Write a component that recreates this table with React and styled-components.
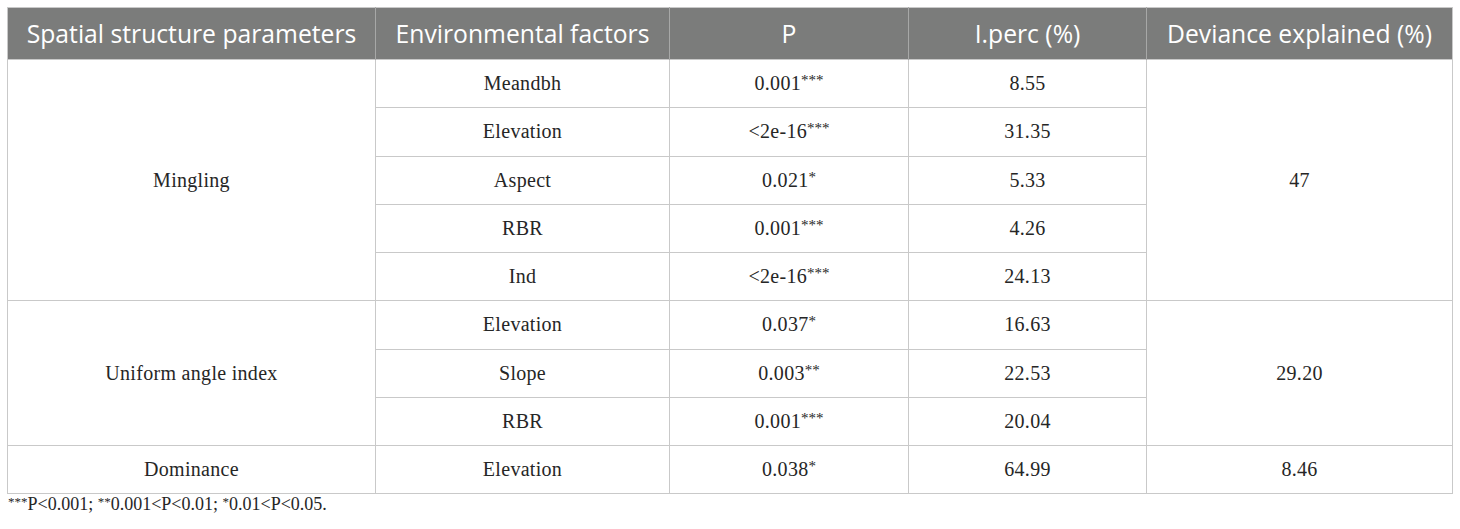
import React from "react";
import styled, { createGlobalStyle } from "styled-components";

const GlobalStyle = createGlobalStyle`
  body {
    margin: 0;
    background: #ffffff;
  }
`;

const rows = [
  { group: "Mingling", span: 5, dev: "47", factor: "Meandbh", p: "0.001", stars: "***", perc: "8.55" },
  { factor: "Elevation", p: "<2e-16", stars: "***", perc: "31.35" },
  { factor: "Aspect", p: "0.021", stars: "*", perc: "5.33" },
  { factor: "RBR", p: "0.001", stars: "***", perc: "4.26" },
  { factor: "Ind", p: "<2e-16", stars: "***", perc: "24.13" },
  { group: "Uniform angle index", span: 3, dev: "29.20", factor: "Elevation", p: "0.037", stars: "*", perc: "16.63" },
  { factor: "Slope", p: "0.003", stars: "**", perc: "22.53" },
  { factor: "RBR", p: "0.001", stars: "***", perc: "20.04" },
  { group: "Dominance", span: 1, dev: "8.46", factor: "Elevation", p: "0.038", stars: "*", perc: "64.99" },
];

const Page = styled.div`
  padding: 7px 8px 0 7px;
`;

const Table = styled.table`
  width: 1445px;
  border-collapse: collapse;
  table-layout: fixed;
  border: 1px solid #c9c9c9;
`;

const HeadCell = styled.th`
  height: 51px;
  padding: 0;
  background: #7b7c7b;
  color: #ffffff;
  font-family: "Open Sans", "Noto Sans", sans-serif;
  font-weight: 400;
  font-size: 24.7px;
  text-align: center;
  border-left: 1px solid #a7a8a7;
  white-space: nowrap;
  &:first-child {
    border-left: none;
  }
`;

const Cell = styled.td`
  height: 47.25px;
  padding: 0;
  text-align: center;
  vertical-align: middle;
  font-family: "Liberation Serif", "Times New Roman", serif;
  font-size: 20px;
  letter-spacing: 0.3px;
  color: #262626;
  border: 1px solid #c9c9c9;
`;

const Stars = styled.sup`
  font-size: 15px;
  vertical-align: 5px;
  letter-spacing: 0;
`;

const Footnote = styled.p`
  margin: 0 0 0 1px;
  font-family: "Liberation Serif", "Times New Roman", serif;
  font-size: 18px;
  color: #262626;
  sup {
    font-size: 13px;
    vertical-align: 4px;
  }
`;

export default function App() {
  return (
    <Page>
      <GlobalStyle />
      <Table>
        <colgroup>
          <col style={{ width: 368 }} />
          <col style={{ width: 294 }} />
          <col style={{ width: 239 }} />
          <col style={{ width: 238 }} />
          <col style={{ width: 306 }} />
        </colgroup>
        <thead>
          <tr>
            <HeadCell>Spatial structure parameters</HeadCell>
            <HeadCell>Environmental factors</HeadCell>
            <HeadCell>P</HeadCell>
            <HeadCell>I.perc (%)</HeadCell>
            <HeadCell>Deviance explained (%)</HeadCell>
          </tr>
        </thead>
        <tbody>
          {rows.map((r, i) => (
            <tr key={i}>
              {r.group && <Cell rowSpan={r.span}>{r.group}</Cell>}
              <Cell>{r.factor}</Cell>
              <Cell>
                {r.p}
                <Stars>{r.stars}</Stars>
              </Cell>
              <Cell>{r.perc}</Cell>
              {r.group && <Cell rowSpan={r.span}>{r.dev}</Cell>}
            </tr>
          ))}
        </tbody>
      </Table>
      <Footnote>
        <sup>***</sup>P&lt;0.001; <sup>**</sup>0.001&lt;P&lt;0.01; <sup>*</sup>0.01&lt;P&lt;0.05.
      </Footnote>
    </Page>
  );
}
